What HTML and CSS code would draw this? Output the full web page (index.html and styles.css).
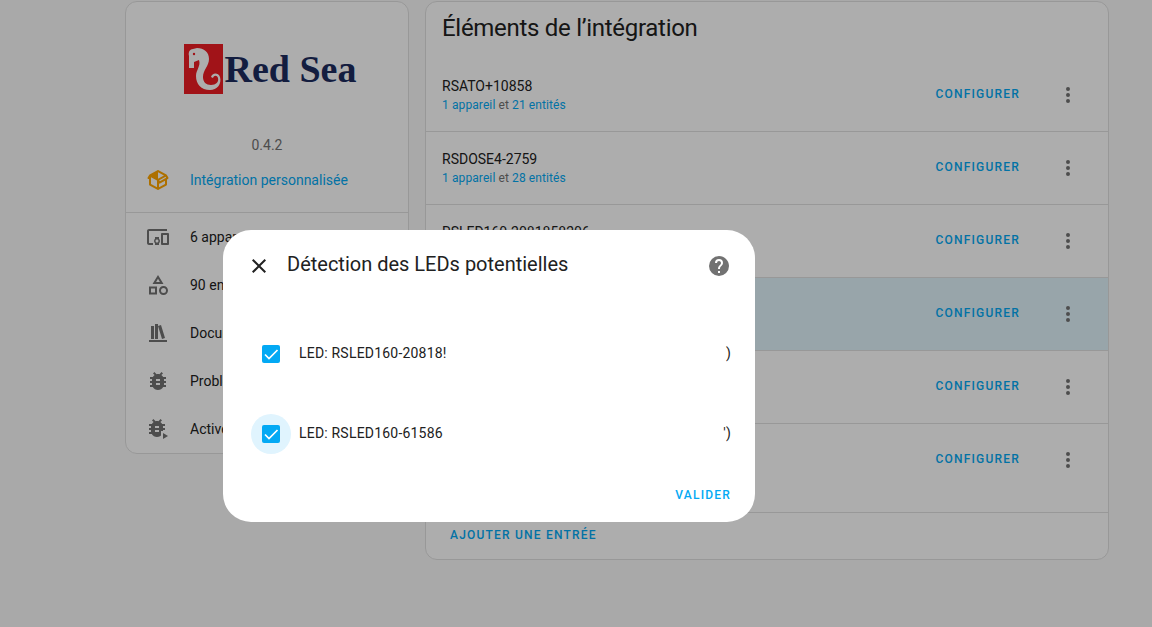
FILE: index.html
```html
<!DOCTYPE html>
<html lang="fr">
<head>
<meta charset="utf-8">
<meta name="viewport" content="width=device-width, initial-scale=1">
<title>Red Sea</title>
<link rel="stylesheet" href="styles.css">
</head>
<body>
<svg class="sprite" aria-hidden="true">
  <symbol id="dots" viewBox="0 0 24 24"><path d="M12,16A2,2 0 0,1 14,18A2,2 0 0,1 12,20A2,2 0 0,1 10,18A2,2 0 0,1 12,16M12,10A2,2 0 0,1 14,12A2,2 0 0,1 12,14A2,2 0 0,1 10,12A2,2 0 0,1 12,10M12,4A2,2 0 0,1 14,6A2,2 0 0,1 12,8A2,2 0 0,1 10,6A2,2 0 0,1 12,4Z"/></symbol>
  <symbol id="bug" viewBox="0 0 24 24"><path d="M14,12H10V10H14M14,16H10V14H14M20,8H17.19C16.74,7.22 16.12,6.55 15.37,6.04L17,4.41L15.59,3L13.42,5.17C12.96,5.06 12.49,5 12,5C11.51,5 11.04,5.06 10.59,5.17L8.41,3L7,4.41L8.62,6.04C7.88,6.55 7.26,7.22 6.81,8H4V10H6.09C6.04,10.33 6,10.66 6,11V12H4V14H6V15C6,15.34 6.04,15.67 6.09,16H4V18H6.81C7.85,19.79 9.78,21 12,21C14.22,21 16.15,19.79 17.19,18H20V16H17.91C17.96,15.67 18,15.34 18,15V14H20V12H18V11C18,10.66 17.96,10.33 17.91,10H20V8Z"/></symbol>
  <clipPath id="bug-cut"><path d="M0 0H24V14H15V24H0Z"/></clipPath>
</svg>

<main class="page">
  <aside class="card summary">
    <div class="brand">
      <svg class="brand-mark" viewBox="0 0 39 50" aria-hidden="true">
        <rect width="39" height="50" fill="#ed1c24"/>
        <path fill="#fff" d="M5 24V12C4 8 6 5 9 5L13 4C20 4 25 8 25 15C25 22 19 26 19 33C19 38 22 41 27 41C32 41 35 38 34 34C33 31 30 31 29 34L27 33C28 29 34 28 36 33C38 40 33 46 26 46C17 46 12 40 12 32C12 26 17 22 15 16L10 18V24Z"/>
        <circle cx="10" cy="10" r="1.2" fill="#ed1c24"/>
      </svg>
      <span class="brand-name">Red Sea</span>
    </div>
    <div class="version">0.4.2</div>
    <a class="item custom" href="#">
      <svg class="icon" viewBox="0 0 24 24"><path fill-rule="evenodd" d="M2,10.96C1.5,10.68 1.35,10.07 1.63,9.59L3.13,7C3.24,6.8 3.41,6.66 3.6,6.58L11.43,2.18C11.59,2.06 11.79,2 12,2C12.21,2 12.41,2.06 12.57,2.18L20.47,6.62C20.66,6.72 20.82,6.88 20.91,7.08L22.36,9.6C22.64,10.08 22.47,10.69 22,10.96L21,11.54V16.5C21,16.88 20.79,17.21 20.47,17.38L12.57,21.82C12.41,21.94 12.21,22 12,22C11.79,22 11.59,21.94 11.43,21.82L3.53,17.38C3.21,17.21 3,16.88 3,16.5V10.96C2.7,11.13 2.32,11.14 2,10.96M12,4.15V10.85L17.96,7.5L12,4.15M5,15.91L11,19.29V12.58L5,9.21V15.91M19,15.91V12.69L14,15.59C13.67,15.77 13.3,15.76 13,15.6V19.29L19,15.91M13.85,13.36L20.13,9.73L19.55,8.72L13.27,12.35L13.85,13.36Z"/></svg>
      <span>Intégration personnalisée</span>
    </a>
    <nav class="links">
      <a class="item" href="#"><svg class="icon" viewBox="0 0 24 24"><path d="M3 6H21V4H3C1.9 4 1 4.9 1 6V18C1 19.1 1.9 20 3 20H7V18H3V6M13 12H9V13.78C8.39 14.33 8 15.11 8 16C8 16.89 8.39 17.67 9 18.22V20H13V18.22C13.61 17.67 14 16.88 14 16S13.61 14.33 13 13.78V12M11 17.5C10.17 17.5 9.5 16.83 9.5 16S10.17 14.5 11 14.5 12.5 15.17 12.5 16 11.83 17.5 11 17.5M22 8H16C15.5 8 15 8.5 15 9V19C15 19.5 15.5 20 16 20H22C22.5 20 23 19.5 23 19V9C23 8.5 22.5 8 22 8M21 18H17V10H21V18Z"/></svg><span>6 appareils</span></a>
      <a class="item" href="#"><svg class="icon" viewBox="0 0 24 24"><path d="M11,13.5V21.5H3V13.5H11M9,15.5H5V19.5H9V15.5M12,2L17.5,11H6.5L12,2M12,5.86L10.08,9H13.92L12,5.86M17.5,13C20,13 22,15 22,17.5C22,20 20,22 17.5,22C15,22 13,20 13,17.5C13,15 15,13 17.5,13M17.5,15A2.5,2.5 0 0,0 15,17.5A2.5,2.5 0 0,0 17.5,20A2.5,2.5 0 0,0 20,17.5A2.5,2.5 0 0,0 17.5,15Z"/></svg><span>90 entités</span></a>
      <a class="item" href="#"><svg class="icon" viewBox="0 0 24 24"><path d="M9 3V18H12V3H9M12 5L16 18L19 17L15 4L12 5M5 5V18H8V5H5M3 19V21H21V19H3Z"/></svg><span>Documentation</span></a>
      <a class="item" href="#"><svg class="icon"><use href="#bug"/></svg><span>Problèmes connus</span></a>
      <a class="item" href="#"><svg class="icon" viewBox="0 0 24 24"><g clip-path="url(#bug-cut)"><use href="#bug" x="-1" y="-1" width="24" height="24"/></g><path d="M17 16V22L22 19Z"/></svg><span>Activer le débogage</span></a>
    </nav>
  </aside>

  <section class="card entries">
    <h1 class="heading">Éléments de l’intégration</h1>
    <ul class="rows">
      <li class="row">
        <div class="info"><div class="name">RSATO+10858</div><div class="detail"><a href="#">1 appareil</a> et <a href="#">21 entités</a></div></div>
        <button class="text-button">CONFIGURER</button>
        <button class="icon-button" aria-label="Menu"><svg class="icon"><use href="#dots"/></svg></button>
      </li>
      <li class="row">
        <div class="info"><div class="name">RSDOSE4-2759</div><div class="detail"><a href="#">1 appareil</a> et <a href="#">28 entités</a></div></div>
        <button class="text-button">CONFIGURER</button>
        <button class="icon-button" aria-label="Menu"><svg class="icon"><use href="#dots"/></svg></button>
      </li>
      <li class="row">
        <div class="info"><div class="name">RSLED160-2081858206</div><div class="detail"></div></div>
        <button class="text-button">CONFIGURER</button>
        <button class="icon-button" aria-label="Menu"><svg class="icon"><use href="#dots"/></svg></button>
      </li>
      <li class="row highlighted">
        <div class="info"></div>
        <button class="text-button">CONFIGURER</button>
        <button class="icon-button" aria-label="Menu"><svg class="icon"><use href="#dots"/></svg></button>
      </li>
      <li class="row">
        <div class="info"></div>
        <button class="text-button">CONFIGURER</button>
        <button class="icon-button" aria-label="Menu"><svg class="icon"><use href="#dots"/></svg></button>
      </li>
      <li class="row">
        <div class="info"></div>
        <button class="text-button">CONFIGURER</button>
        <button class="icon-button" aria-label="Menu"><svg class="icon"><use href="#dots"/></svg></button>
      </li>
    </ul>
    <footer class="actions"><button class="text-button">AJOUTER UNE ENTRÉE</button></footer>
  </section>
</main>

<div class="scrim"></div>
<div class="dialog" role="dialog" aria-modal="true" aria-labelledby="dialog-title">
  <header class="dialog-header">
    <button class="icon-button close" aria-label="Fermer"><svg class="icon" viewBox="0 0 24 24"><path d="M19,6.41L17.59,5L12,10.59L6.41,5L5,6.41L10.59,12L5,17.59L6.41,19L12,13.41L17.59,19L19,17.59L13.41,12L19,6.41Z"/></svg></button>
    <h2 class="dialog-title" id="dialog-title">Détection des LEDs potentielles</h2>
    <button class="icon-button" aria-label="Aide"><svg class="icon" viewBox="0 0 24 24"><path d="M15.07,11.25L14.17,12.17C13.45,12.89 13,13.5 13,15H11V14.5C11,13.39 11.45,12.39 12.17,11.67L13.41,10.41C13.78,10.05 14,9.55 14,9C14,7.89 13.1,7 12,7A2,2 0 0,0 10,9H8A4,4 0 0,1 12,5A4,4 0 0,1 16,9C16,9.88 15.64,10.67 15.07,11.25M13,19H11V17H13M12,2A10,10 0 0,0 2,12A10,10 0 0,0 12,22A10,10 0 0,0 22,12C22,6.47 17.5,2 12,2Z"/></svg></button>
  </header>
  <div class="options">
    <label class="option"><span class="halo"><input class="check" type="checkbox" checked></span><span class="label">LED: RSLED160-20818!</span><span class="label end">)</span></label>
    <label class="option focused"><span class="halo"><input class="check" type="checkbox" checked></span><span class="label">LED: RSLED160-61586</span><span class="label end">')</span></label>
  </div>
  <footer class="dialog-actions"><button class="text-button">VALIDER</button></footer>
</div>
</body>
</html>
```

FILE: styles.css
```css
:root {
  --primary: #03a9f4;
  --text: #212121;
  --secondary: #727272;
  --divider: #e0e0e0;
}

* { box-sizing: border-box; }

body {
  margin: 0;
  min-height: 100vh;
  position: relative;
  background: #fafafa;
  color: var(--text);
  font: 14px/20px Roboto, sans-serif;
}

a { color: var(--primary); text-decoration: none; }

button {
  border: 0;
  background: none;
  font-family: inherit;
  cursor: pointer;
}

.sprite { position: absolute; width: 0; height: 0; }

.icon { display: block; width: 24px; height: 24px; flex: none; fill: currentColor; }

.page {
  display: grid;
  grid-template-columns: 284px minmax(0, 1fr);
  align-items: start;
  gap: 16px;
  padding: 1px 43px 0 125px;
}

.card {
  background: #fff;
  border: 1px solid var(--divider);
  border-radius: 12px;
}

.brand {
  display: flex;
  align-items: center;
  justify-content: center;
  gap: 2px;
  height: 133px;
  padding-left: 6px;
}

.brand-mark { width: 39px; height: 50px; }

.brand-name {
  color: #1c2c5e;
  font: bold 38px/50px "Liberation Serif", serif;
}

.version { color: var(--secondary); text-align: center; height: 21px; }

.item {
  display: flex;
  align-items: center;
  gap: 20px;
  height: 48px;
  padding: 0 20px;
  color: var(--text);
}

.item .icon { color: var(--secondary); }
.custom { color: var(--primary); margin-bottom: 8px; }
.custom .icon { color: #ffa600; }
.links { border-top: 1px solid var(--divider); }

.heading {
  margin: 0;
  padding: 10px 16px 15px;
  font-size: 24px;
  line-height: 32px;
  font-weight: 400;
  letter-spacing: -0.012em;
}

.rows {
  margin: 0;
  padding: 0 0 16px;
  list-style: none;
}

.row {
  display: flex;
  align-items: center;
  height: 73px;
  padding: 0 16px;
  border-bottom: 1px solid var(--divider);
}

.row:last-child { height: 72px; border-bottom: 0; }
.highlighted { background: #e1f3fb; }
.info { flex: 1; min-width: 0; }
.detail { color: var(--secondary); font-size: 12px; line-height: 18px; min-height: 18px; letter-spacing: 0.1px; }

.text-button {
  height: 36px;
  padding: 0 8px 2px;
  color: var(--primary);
  font-size: 12px;
  font-weight: 500;
  letter-spacing: 1.2px;
}

.icon-button {
  display: grid;
  place-items: center;
  width: 48px;
  height: 48px;
  padding: 0;
  color: var(--secondary);
}

.row .icon-button { margin-left: 16px; }

.actions {
  display: flex;
  align-items: center;
  height: 47px;
  padding: 0 16px;
  border-top: 1px solid var(--divider);
}

.scrim { position: absolute; inset: 0; background: rgba(0, 0, 0, 0.32); }

.dialog {
  position: absolute;
  top: 230px;
  left: 223px;
  width: 532px;
  padding: 12px 12px 8px;
  background: #fff;
  border-radius: 28px;
}

.dialog-header { display: flex; align-items: center; }
.close { color: var(--text); }

.dialog-title {
  flex: 1;
  margin: 0;
  padding: 0 4px 4px;
  font-size: 20px;
  line-height: 24px;
  font-weight: 400;
}

.options { padding: 24px 12px 4px 16px; }
.option { display: flex; align-items: center; height: 80px; }

.halo {
  display: grid;
  place-items: center;
  width: 40px;
  height: 40px;
  margin-right: 8px;
  border-radius: 50%;
}

.focused .halo { background: #e0f4fe; }

.check {
  appearance: none;
  width: 18px;
  height: 18px;
  margin: 0;
  border-radius: 2px;
  background: var(--primary) url("data:image/svg+xml,%3Csvg xmlns='http://www.w3.org/2000/svg' viewBox='0 0 18 18'%3E%3Cpath d='M3 9.5L7 13.5L15.5 5' fill='none' stroke='white' stroke-width='1.7'/%3E%3C/svg%3E");
}

.label { padding-bottom: 2px; letter-spacing: 0.2px; white-space: nowrap; }
.end { margin-left: auto; }

.dialog-actions { display: flex; justify-content: flex-end; padding-right: 4px; }
```
